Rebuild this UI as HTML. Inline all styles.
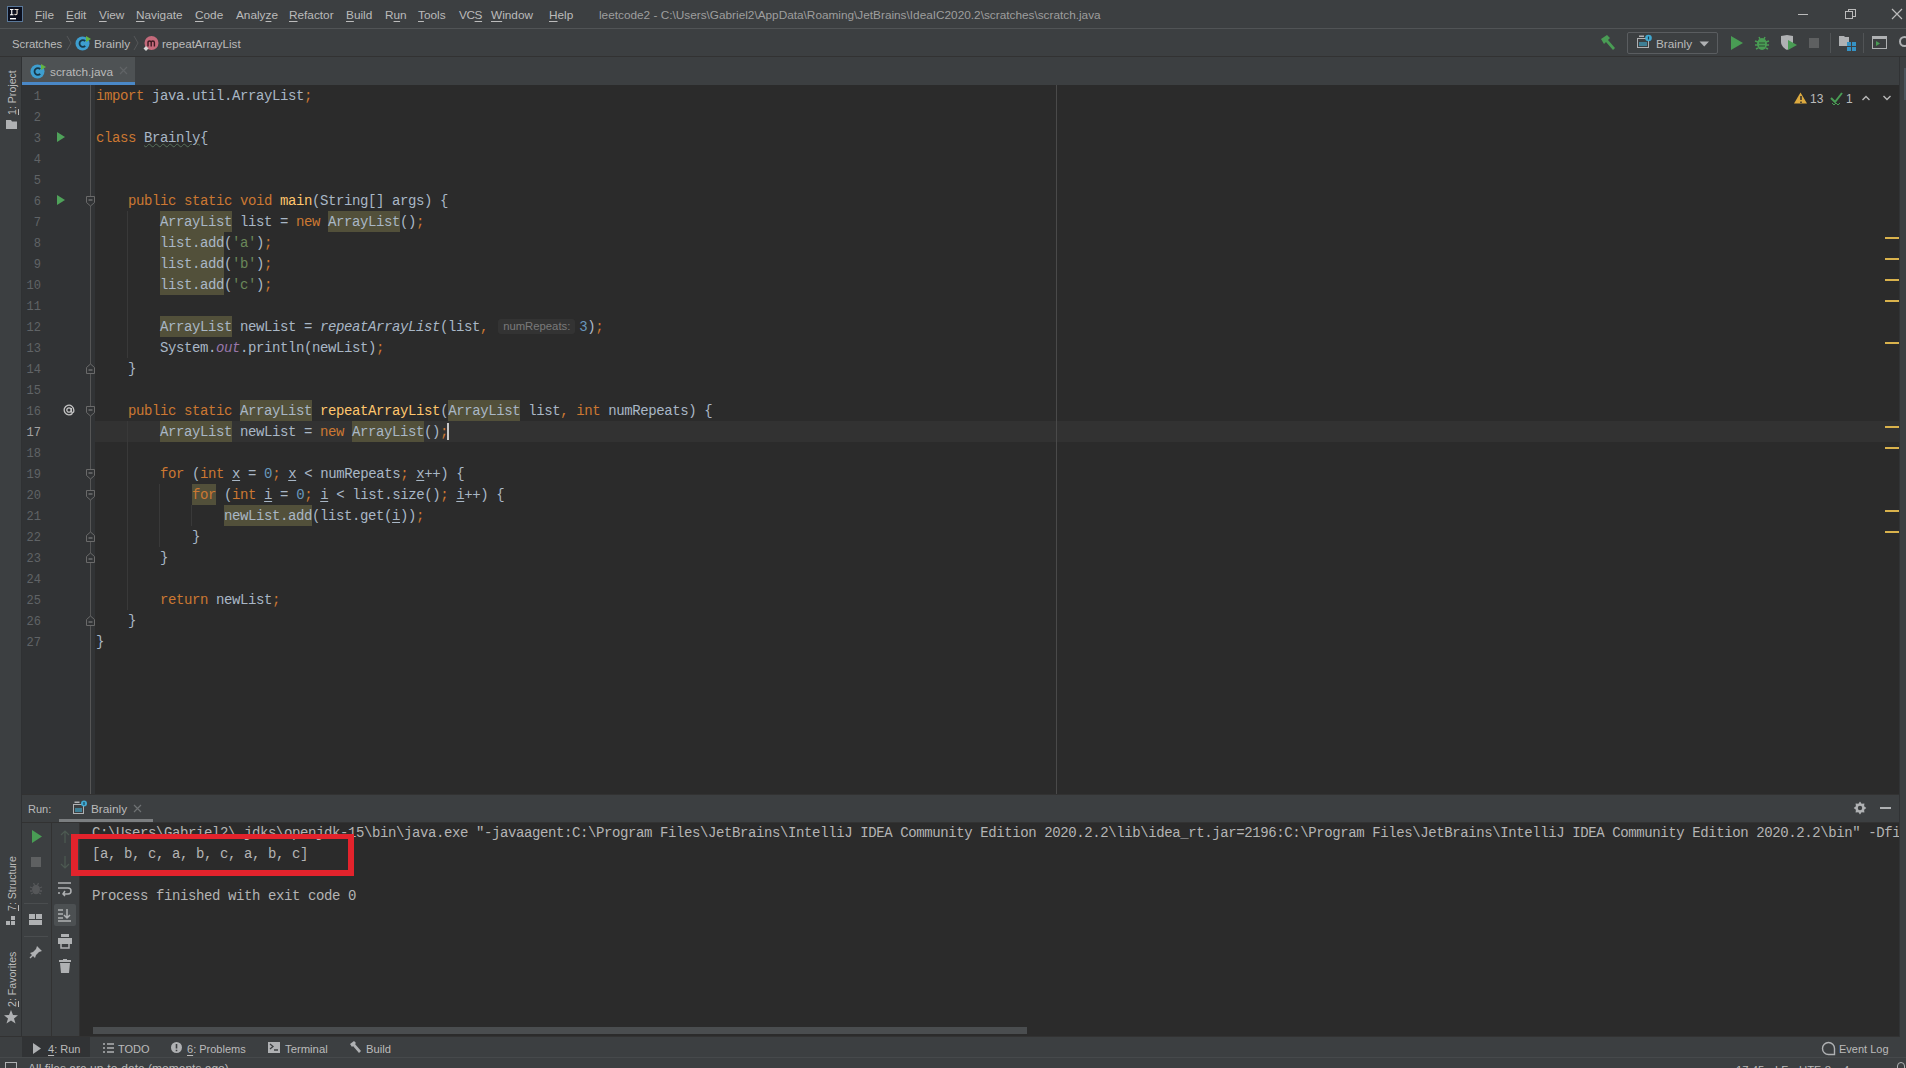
<!DOCTYPE html>
<html><head><meta charset="utf-8">
<style>
*{margin:0;padding:0;box-sizing:border-box}
html,body{width:1906px;height:1068px;overflow:hidden;background:#3C3F41}
body{position:relative;font-family:"Liberation Sans",sans-serif;font-size:13px;color:#BBBBBB}
.a{position:absolute}
.ui{position:absolute;font-family:"Liberation Sans",sans-serif;font-size:11.8px;color:#BBBBBB;white-space:nowrap;line-height:16px}
.mono{font-family:"Liberation Mono",monospace;font-size:14px;letter-spacing:-0.4px;white-space:pre}
.k{color:#CC7832}.d{color:#A9B7C6}.s{color:#6A8759}.n{color:#6897BB}.m{color:#FFC66D}
.f{color:#9876AA;font-style:italic}.it{font-style:italic}.w{position:relative}.w::before{content:"";position:absolute;left:0;right:0;top:-3px;height:21px;background:#52503A;z-index:-1}
.u{text-decoration:underline;text-decoration-color:#A9B7C6;text-underline-offset:2px}
.wv{text-decoration:underline wavy #56705A;text-decoration-thickness:1px;text-underline-offset:1px}
.ln{position:absolute;left:22px;width:19px;height:21px;text-align:right;font-family:"Liberation Mono",monospace;font-size:12px;line-height:21px;color:#606366}
.cl{position:absolute;left:96px;height:21px;line-height:21px;z-index:1;padding-top:1px}
.hint{display:inline-block;font-family:"Liberation Sans",sans-serif;font-size:11.3px;letter-spacing:0;color:#7A7A7A;background:#333333;border-radius:3px;padding:0 5px 0 5px;line-height:15px;margin:0 4px 0 2px;vertical-align:1px}
.caret{display:inline-block;width:2px;height:17px;background:#C8C8C8;vertical-align:-4px;margin-left:-1px}
.vt{position:absolute;transform-origin:0 0;transform:rotate(-90deg);font-family:"Liberation Sans",sans-serif;font-size:10.6px;color:#BBBBBB;white-space:nowrap;line-height:12px}
u{text-decoration:underline;text-underline-offset:1.5px}
</style></head><body>

<!-- MENU BAR -->
<div class="a" style="left:0;top:28px;width:1906px;height:1px;background:#515456"></div>
<!-- IJ logo -->
<div class="a" style="left:7px;top:6px;width:16px;height:16px;background:#0B0F1E;border:1px solid #5A7899"></div>
<svg class="a" style="left:9px;top:8px" width="12" height="12"><path d="M1 1H4.5V2H3.3V6.2H4.5V7.2H1V6.2H2.2V2H1Z" fill="#FFFFFF"/><path d="M5.5 1H9.5V2H8.6V5.6Q8.6 7.3 6.8 7.3Q5.4 7.3 5.2 6L6.2 5.7Q6.4 6.3 6.9 6.3Q7.5 6.3 7.5 5.5V2H5.5Z" fill="#F2E6D6"/><rect x="1" y="10" width="6" height="1.4" fill="#FFFFFF"/></svg>
<div class="ui" style="left:35px;top:7px"><u>F</u>ile</div>
<div class="ui" style="left:66px;top:7px"><u>E</u>dit</div>
<div class="ui" style="left:99px;top:7px"><u>V</u>iew</div>
<div class="ui" style="left:136px;top:7px"><u>N</u>avigate</div>
<div class="ui" style="left:195px;top:7px"><u>C</u>ode</div>
<div class="ui" style="left:236px;top:7px">Analy<u>z</u>e</div>
<div class="ui" style="left:289px;top:7px"><u>R</u>efactor</div>
<div class="ui" style="left:346px;top:7px"><u>B</u>uild</div>
<div class="ui" style="left:385px;top:7px">R<u>u</u>n</div>
<div class="ui" style="left:418px;top:7px"><u>T</u>ools</div>
<div class="ui" style="left:459px;top:7px;letter-spacing:-0.4px">VC<u>S</u></div>
<div class="ui" style="left:491px;top:7px"><u>W</u>indow</div>
<div class="ui" style="left:549px;top:7px"><u>H</u>elp</div>
<div class="ui" style="left:599px;top:7px;color:#9E9E9E">leetcode2 - C:\Users\Gabriel2\AppData\Roaming\JetBrains\IdeaIC2020.2\scratches\scratch.java</div>
<!-- window controls -->
<div class="a" style="left:1798px;top:14px;width:10px;height:1px;background:#BBBBBB"></div>
<div class="a" style="left:1848px;top:9px;width:8px;height:8px;border:1px solid #BBBBBB"></div>
<div class="a" style="left:1845px;top:11px;width:8px;height:8px;border:1px solid #BBBBBB;background:#3C3F41"></div>
<svg class="a" style="left:1891px;top:8px" width="12" height="12"><path d="M1 1L11 11M11 1L1 11" stroke="#BBBBBB" stroke-width="1.2"/></svg>

<!-- NAV BAR -->
<div class="a" style="left:0;top:56px;width:1906px;height:1px;background:#323232"></div>
<div class="ui" style="left:12px;top:36px;font-size:11.3px">Scratches</div>
<svg class="a" style="left:66px;top:35px" width="6" height="16"><path d="M1 1L5 8L1 15" stroke="#555759" fill="none"/></svg>
<svg class="a" style="left:75px;top:35px" width="17" height="16"><circle cx="7.5" cy="8.5" r="7" fill="#3E9ECF"/><path d="M10.2 6.2A3.3 3.3 0 1 0 10.2 10.8" stroke="#173848" stroke-width="1.8" fill="none"/><path d="M11 1L16 4L11 7Z" fill="#62B543"/></svg>
<div class="ui" style="left:94px;top:36px">Brainly</div>
<svg class="a" style="left:133px;top:35px" width="6" height="16"><path d="M1 1L5 8L1 15" stroke="#555759" fill="none"/></svg>
<svg class="a" style="left:142px;top:35px" width="18" height="17"><circle cx="9.5" cy="8" r="7" fill="#C46A7B"/><path d="M6 11.5V6.5M6 7.5Q6 6 7.6 6Q9.2 6 9.2 7.5V11.5M9.2 7.5Q9.2 6 10.8 6Q12.4 6 12.4 7.5V11.5" stroke="#3B1A22" stroke-width="1.4" fill="none"/><path d="M4 11L6.5 13.5L4 16L1.5 13.5Z" fill="#D8D8D8"/></svg>
<div class="ui" style="left:162px;top:36px;font-size:11.6px">repeatArrayList</div>

<!-- toolbar right -->
<svg class="a" style="left:1599px;top:34px" width="18" height="17"><path d="M2 5L8 1L11 4L9 6L16 14L14 16L7 8L5 10Z" fill="#499C54"/></svg>
<div class="a" style="left:1627px;top:32px;width:91px;height:22px;border:1px solid #5A5D60;border-radius:2px"></div>
<svg class="a" style="left:1636px;top:34px" width="18" height="16"><rect x="1.5" y="4.5" width="11" height="9" fill="none" stroke="#AFB1B3"/><rect x="3" y="8" width="8" height="4" fill="#3F7F95"/><rect x="3" y="1.5" width="5" height="1.5" fill="#AFB1B3"/><circle cx="12.5" cy="4" r="3.3" fill="#40A8D0"/><path d="M12.5 2.5V5.5" stroke="#1D3D4A" stroke-width="1.2"/></svg>
<div class="ui" style="left:1656px;top:36px">Brainly</div>
<svg class="a" style="left:1699px;top:41px" width="11" height="6"><path d="M0.5 0.5H10L5.25 5.5Z" fill="#AFB1B3"/></svg>
<svg class="a" style="left:1730px;top:36px" width="14" height="14"><path d="M1 0L13 7L1 14Z" fill="#499C54"/></svg>
<svg class="a" style="left:1754px;top:35px" width="16" height="16"><ellipse cx="8" cy="9" rx="5" ry="6" fill="#499C54"/><path d="M1 6L4 7M15 6L12 7M1 10H4M15 10H12M2 14L4 13M14 14L12 13M5 2L6 4M11 2L10 4" stroke="#499C54" stroke-width="1.5"/><path d="M5 8H11M5 11H11" stroke="#2E4A33" stroke-width="1.2"/></svg>
<svg class="a" style="left:1779px;top:34px" width="20" height="18"><path d="M2 2L8 1L14 2V8C14 12 10 15 8 16C6 15 2 12 2 8Z" fill="#AFB1B3"/><path d="M9 6L18 11L9 16Z" fill="#499C54"/></svg>
<div class="a" style="left:1809px;top:38px;width:10px;height:10px;background:#5E6061"></div>
<div class="a" style="left:1830px;top:33px;width:1px;height:20px;background:#515456"></div>
<svg class="a" style="left:1838px;top:34px" width="20" height="18"><path d="M1 2H6L7 3H11V12H1Z" fill="#AFB1B3"/><rect x="9" y="8" width="4" height="4" fill="#3592C4"/><rect x="14" y="8" width="4" height="4" fill="#3592C4"/><rect x="9" y="13" width="4" height="4" fill="#3592C4"/><rect x="14" y="13" width="4" height="4" fill="#3592C4"/></svg>
<div class="a" style="left:1863px;top:33px;width:1px;height:20px;background:#515456"></div>
<svg class="a" style="left:1872px;top:36px" width="16" height="14"><rect x="0.5" y="0.5" width="14" height="12" fill="none" stroke="#AFB1B3"/><rect x="1" y="1" width="13" height="2" fill="#AFB1B3"/><path d="M4 5L8 7.5L4 10Z" fill="#499C54"/></svg>
<div class="a" style="left:1899px;top:36px;width:11px;height:11px;border:2px solid #AFB1B3;border-radius:50%"></div>

<!-- LEFT STRIP -->
<div class="a" style="left:21px;top:57px;width:1px;height:980px;background:#2F3133"></div>
<div class="vt" style="left:6px;top:115px"><u>1</u>: Project</div>
<svg class="a" style="left:6px;top:119px" width="11" height="10"><path d="M0 1H5L6 2.5H11V10H0Z" fill="#AFB1B3"/></svg>
<div class="vt" style="left:6px;top:911px"><u>7</u>: Structure</div>
<svg class="a" style="left:6px;top:916px" width="11" height="11"><rect x="5" y="0" width="4" height="4" fill="#AFB1B3"/><rect x="0" y="5" width="4" height="4" fill="#AFB1B3"/><rect x="5" y="5" width="4" height="4" fill="#AFB1B3"/></svg>
<div class="vt" style="left:6px;top:1007px"><u>2</u>: Favorites</div>
<svg class="a" style="left:4px;top:1010px" width="14" height="14"><path d="M7 0L9 5L14 5.3L10 8.5L11.5 13.5L7 10.5L2.5 13.5L4 8.5L0 5.3L5 5Z" fill="#AFB1B3"/></svg>

<!-- TAB BAR -->
<div class="a" style="left:22px;top:57px;width:113px;height:28px;background:#4E5254"></div>
<div class="a" style="left:22px;top:82px;width:113px;height:3px;background:#4A88C7"></div>
<svg class="a" style="left:30px;top:63px" width="17" height="16"><circle cx="7.5" cy="8.5" r="7" fill="#3E9ECF"/><path d="M10.2 6.2A3.3 3.3 0 1 0 10.2 10.8" stroke="#173848" stroke-width="1.8" fill="none"/><path d="M11 1L16 4L11 7Z" fill="#62B543"/></svg>
<div class="ui" style="left:50px;top:64px">scratch.java</div>
<svg class="a" style="left:119px;top:66px" width="9" height="9"><path d="M1 1L8 8M8 1L1 8" stroke="#606366" stroke-width="1.2"/></svg>

<!-- EDITOR -->
<div class="a" style="left:22px;top:85px;width:73px;height:709px;background:#313335"></div>
<div class="a" style="left:95px;top:85px;width:1804px;height:709px;background:#2B2B2B"></div>
<div class="a" style="left:90px;top:85px;width:1px;height:709px;background:#555555"></div>
<!-- caret row -->
<div class="a" style="left:95px;top:421px;width:1804px;height:21px;background:#323232"></div>
<!-- right margin -->
<div class="a" style="left:1056px;top:85px;width:1px;height:709px;background:#4A4A4A"></div>
<!-- indent guides -->
<div class="a" style="left:127px;top:211px;width:1px;height:147px;background:#393939"></div>
<div class="a" style="left:127px;top:421px;width:1px;height:189px;background:#393939"></div>
<div class="a" style="left:159px;top:484px;width:1px;height:63px;background:#393939"></div>
<div class="a" style="left:191px;top:505px;width:1px;height:21px;background:#393939"></div>

<div class="ln" style="top:87px">1</div>
<div class="cl mono d" style="top:85px"><span class="k">import</span> java.util.ArrayList<span class="k">;</span></div>
<div class="ln" style="top:108px">2</div>
<div class="ln" style="top:129px">3</div>
<div class="cl mono d" style="top:127px"><span class="k">class</span> <span class="wv">Brainly</span>{</div>
<div class="ln" style="top:150px">4</div>
<div class="ln" style="top:171px">5</div>
<div class="ln" style="top:192px">6</div>
<div class="cl mono d" style="top:190px">    <span class="k">public static void</span> <span class="m">main</span>(String[] args) {</div>
<div class="ln" style="top:213px">7</div>
<div class="cl mono d" style="top:211px">        <span class="w">ArrayList</span> list = <span class="k">new</span> <span class="w">ArrayList</span>()<span class="k">;</span></div>
<div class="ln" style="top:234px">8</div>
<div class="cl mono d" style="top:232px">        <span class="w">list.add</span>(<span class="s">'a'</span>)<span class="k">;</span></div>
<div class="ln" style="top:255px">9</div>
<div class="cl mono d" style="top:253px">        <span class="w">list.add</span>(<span class="s">'b'</span>)<span class="k">;</span></div>
<div class="ln" style="top:276px">10</div>
<div class="cl mono d" style="top:274px">        <span class="w">list.add</span>(<span class="s">'c'</span>)<span class="k">;</span></div>
<div class="ln" style="top:297px">11</div>
<div class="ln" style="top:318px">12</div>
<div class="cl mono d" style="top:316px">        <span class="w">ArrayList</span> newList = <span class="it">repeatArrayList</span>(list<span class="k">,</span> <span class="hint">numRepeats:</span><span class="n">3</span>)<span class="k">;</span></div>
<div class="ln" style="top:339px">13</div>
<div class="cl mono d" style="top:337px">        System.<span class="f">out</span>.println(newList)<span class="k">;</span></div>
<div class="ln" style="top:360px">14</div>
<div class="cl mono d" style="top:358px">    }</div>
<div class="ln" style="top:381px">15</div>
<div class="ln" style="top:402px">16</div>
<div class="cl mono d" style="top:400px">    <span class="k">public static</span> <span class="w">ArrayList</span> <span class="m">repeatArrayList</span>(<span class="w">ArrayList</span> list<span class="k">,</span> <span class="k">int</span> numRepeats) {</div>
<div class="ln" style="top:423px;color:#A4A3A3">17</div>
<div class="cl mono d" style="top:421px">        <span class="w">ArrayList</span> newList = <span class="k">new</span> <span class="w">ArrayList</span>()<span class="k">;</span><span class="caret"></span></div>
<div class="ln" style="top:444px">18</div>
<div class="ln" style="top:465px">19</div>
<div class="cl mono d" style="top:463px">        <span class="k">for</span> (<span class="k">int</span> <span class="u">x</span> = <span class="n">0</span><span class="k">;</span> <span class="u">x</span> &lt; numRepeats<span class="k">;</span> <span class="u">x</span>++) {</div>
<div class="ln" style="top:486px">20</div>
<div class="cl mono d" style="top:484px">            <span class="k w">for</span> (<span class="k">int</span> <span class="u">i</span> = <span class="n">0</span><span class="k">;</span> <span class="u">i</span> &lt; list.size()<span class="k">;</span> <span class="u">i</span>++) {</div>
<div class="ln" style="top:507px">21</div>
<div class="cl mono d" style="top:505px">                <span class="w">newList.add</span>(list.get(<span class="u">i</span>))<span class="k">;</span></div>
<div class="ln" style="top:528px">22</div>
<div class="cl mono d" style="top:526px">            }</div>
<div class="ln" style="top:549px">23</div>
<div class="cl mono d" style="top:547px">        }</div>
<div class="ln" style="top:570px">24</div>
<div class="ln" style="top:591px">25</div>
<div class="cl mono d" style="top:589px">        <span class="k">return</span> newList<span class="k">;</span></div>
<div class="ln" style="top:612px">26</div>
<div class="cl mono d" style="top:610px">    }</div>
<div class="ln" style="top:633px">27</div>
<div class="cl mono d" style="top:631px">}</div>
<svg class="a" style="left:85px;top:196px;z-index:2" width="11" height="11"><path d="M1.5 0.5H9.5V6.5L5.5 10L1.5 6.5Z" fill="#313335" stroke="#6A6A6A"/><path d="M3.5 4H7.5" stroke="#8A8A8A"/></svg>
<svg class="a" style="left:85px;top:406px;z-index:2" width="11" height="11"><path d="M1.5 0.5H9.5V6.5L5.5 10L1.5 6.5Z" fill="#313335" stroke="#6A6A6A"/><path d="M3.5 4H7.5" stroke="#8A8A8A"/></svg>
<svg class="a" style="left:85px;top:469px;z-index:2" width="11" height="11"><path d="M1.5 0.5H9.5V6.5L5.5 10L1.5 6.5Z" fill="#313335" stroke="#6A6A6A"/><path d="M3.5 4H7.5" stroke="#8A8A8A"/></svg>
<svg class="a" style="left:85px;top:490px;z-index:2" width="11" height="11"><path d="M1.5 0.5H9.5V6.5L5.5 10L1.5 6.5Z" fill="#313335" stroke="#6A6A6A"/><path d="M3.5 4H7.5" stroke="#8A8A8A"/></svg>
<svg class="a" style="left:85px;top:363px;z-index:2" width="11" height="11"><path d="M1.5 10.5H9.5V4.5L5.5 1L1.5 4.5Z" fill="#313335" stroke="#6A6A6A"/><path d="M3.5 7H7.5" stroke="#8A8A8A"/></svg>
<svg class="a" style="left:85px;top:531px;z-index:2" width="11" height="11"><path d="M1.5 10.5H9.5V4.5L5.5 1L1.5 4.5Z" fill="#313335" stroke="#6A6A6A"/><path d="M3.5 7H7.5" stroke="#8A8A8A"/></svg>
<svg class="a" style="left:85px;top:552px;z-index:2" width="11" height="11"><path d="M1.5 10.5H9.5V4.5L5.5 1L1.5 4.5Z" fill="#313335" stroke="#6A6A6A"/><path d="M3.5 7H7.5" stroke="#8A8A8A"/></svg>
<svg class="a" style="left:85px;top:615px;z-index:2" width="11" height="11"><path d="M1.5 10.5H9.5V4.5L5.5 1L1.5 4.5Z" fill="#313335" stroke="#6A6A6A"/><path d="M3.5 7H7.5" stroke="#8A8A8A"/></svg>

<!-- gutter icons -->
<svg class="a" style="left:57px;top:132px" width="9" height="11"><path d="M0 0L8 5L0 10Z" fill="#4FA25A"/></svg>
<svg class="a" style="left:57px;top:195px" width="9" height="11"><path d="M0 0L8 5L0 10Z" fill="#4FA25A"/></svg>
<svg class="a" style="left:63px;top:404px" width="12" height="12"><path d="M9.6 9.2A4.8 4.8 0 1 1 10.8 6V7.2Q10.8 8.4 9.6 8.4Q8.4 8.4 8.4 7.2V4" stroke="#C4C4C4" stroke-width="1.3" fill="none"/><circle cx="6" cy="6" r="2.2" stroke="#C4C4C4" stroke-width="1.3" fill="none"/></svg>

<!-- inspection widget -->
<svg class="a" style="left:1794px;top:92px" width="14" height="12"><path d="M6.5 0.5L13 11.5H0Z" fill="#DDAA3F"/><path d="M7 4V8M7 9.5V11" stroke="#2B2B2B" stroke-width="1.5"/></svg>
<div class="ui" style="left:1810px;top:91px;font-size:12px">13</div>
<svg class="a" style="left:1830px;top:92px" width="13" height="14"><path d="M1 6L5 10L12 1" stroke="#499C54" stroke-width="2" fill="none"/><path d="M2 11L4 13L6 11L8 13L10 11" stroke="#499C54" fill="none"/></svg>
<div class="ui" style="left:1846px;top:91px;font-size:12px">1</div>
<svg class="a" style="left:1861px;top:95px" width="10" height="6"><path d="M1.5 5L5 1.5L8.5 5" stroke="#B8B8B8" stroke-width="1.4" fill="none"/></svg>
<svg class="a" style="left:1882px;top:95px" width="10" height="6"><path d="M1.5 1L5 4.5L8.5 1" stroke="#B8B8B8" stroke-width="1.4" fill="none"/></svg>

<!-- error stripe marks -->
<div class="a" style="left:1885px;top:237px;width:14px;height:2px;background:#D9B24C"></div>
<div class="a" style="left:1885px;top:258px;width:14px;height:2px;background:#D9B24C"></div>
<div class="a" style="left:1885px;top:279px;width:14px;height:2px;background:#D9B24C"></div>
<div class="a" style="left:1885px;top:300px;width:14px;height:2px;background:#D9B24C"></div>
<div class="a" style="left:1885px;top:342px;width:14px;height:2px;background:#D9B24C"></div>
<div class="a" style="left:1885px;top:426px;width:14px;height:2px;background:#D9B24C"></div>
<div class="a" style="left:1885px;top:447px;width:14px;height:2px;background:#D9B24C"></div>
<div class="a" style="left:1885px;top:510px;width:14px;height:2px;background:#D9B24C"></div>
<div class="a" style="left:1885px;top:531px;width:14px;height:2px;background:#D9B24C"></div>

<!-- RUN PANEL -->
<div class="a" style="left:22px;top:794px;width:1878px;height:1px;background:#323232"></div>
<div class="a" style="left:22px;top:795px;width:1878px;height:27px;background:#3C3F41"></div>
<div class="ui" style="left:28px;top:801px;font-size:11px">Run:</div>
<svg class="a" style="left:72px;top:800px" width="16" height="15"><rect x="1.5" y="4.5" width="10" height="9" fill="none" stroke="#AFB1B3"/><rect x="3" y="8" width="7" height="4" fill="#3F7F95"/><rect x="2.5" y="1.5" width="5" height="1.5" fill="#AFB1B3"/><circle cx="12" cy="3.5" r="3" fill="#40A8D0"/><path d="M12 2V5" stroke="#1D3D4A" stroke-width="1.1"/></svg>
<div class="ui" style="left:91px;top:801px">Brainly</div>
<svg class="a" style="left:133px;top:804px" width="9" height="9"><path d="M1 1L8 8M8 1L1 8" stroke="#6E7173" stroke-width="1.2"/></svg>
<div class="a" style="left:59px;top:819px;width:94px;height:3px;background:#7B7E80"></div>
<div class="a" style="left:22px;top:822px;width:1878px;height:1px;background:#323232"></div>
<svg class="a" style="left:1853px;top:801px" width="14" height="14"><path d="M7 0.5L8.6 2.7L11.4 2.4L11.1 5.2L13.3 7L11.1 8.8L11.4 11.6L8.6 11.3L7 13.5L5.4 11.3L2.6 11.6L2.9 8.8L0.7 7L2.9 5.2L2.6 2.4L5.4 2.7Z" fill="#AFB1B3"/><circle cx="7" cy="7" r="2.2" fill="#3C3F41"/></svg>
<div class="a" style="left:1880px;top:807px;width:11px;height:2px;background:#AFB1B3"></div>

<!-- console tool columns -->
<div class="a" style="left:51px;top:823px;width:1px;height:214px;background:#323232"></div>
<div class="a" style="left:79px;top:823px;width:1px;height:214px;background:#323232"></div>
<div class="a" style="left:80px;top:823px;width:1820px;height:214px;background:#2B2B2B"></div>
<svg class="a" style="left:31px;top:830px" width="12" height="13"><path d="M1 0L11 6.5L1 13Z" fill="#499C54"/></svg>
<div class="a" style="left:31px;top:857px;width:10px;height:10px;background:#5E6061"></div>
<svg class="a" style="left:29px;top:881px" width="14" height="14"><ellipse cx="7" cy="8.5" rx="4" ry="4.8" fill="#555759"/><path d="M1 6L3.5 7M13 6L10.5 7M1 10H3M13 10H11M2 13L4 12M12 13L10 12M4.5 2L5.5 4M9.5 2L8.5 4" stroke="#555759" stroke-width="1.3"/></svg>
<div class="a" style="left:24px;top:903px;width:24px;height:1px;background:#4A4D4F"></div>
<svg class="a" style="left:29px;top:914px" width="14" height="12"><rect x="0" y="0" width="6" height="5" fill="#AFB1B3"/><rect x="7" y="0" width="6" height="5" fill="#AFB1B3"/><rect x="0" y="6" width="13" height="5" fill="#AFB1B3"/></svg>
<div class="a" style="left:24px;top:936px;width:24px;height:1px;background:#4A4D4F"></div>
<svg class="a" style="left:29px;top:945px" width="14" height="14"><path d="M8 1L13 6L10 7L7 10L6 13L1 8L4 7L7 4Z" fill="#AFB1B3"/><path d="M4 10L1 13" stroke="#AFB1B3" stroke-width="1.5"/></svg>
<svg class="a" style="left:59px;top:830px" width="12" height="14"><path d="M6 1V13M2 5L6 1L10 5" stroke="#4D5A52" stroke-width="1.2" fill="none"/></svg>
<svg class="a" style="left:59px;top:855px" width="12" height="14"><path d="M6 1V13M2 9L6 13L10 9" stroke="#4D5A52" stroke-width="1.2" fill="none"/></svg>
<svg class="a" style="left:57px;top:881px" width="16" height="16"><path d="M1 2H14M1 7H11A3 3 0 0 1 11 13H6M1 12H3M8 10L6 13L8 15" stroke="#AFB1B3" stroke-width="1.5" fill="none"/></svg>
<div class="a" style="left:54px;top:904px;width:22px;height:22px;background:#4C5052;border-radius:2px"></div>
<svg class="a" style="left:57px;top:907px" width="16" height="16"><path d="M1 3H6M1 7H6M1 11H6M1 14H14M10 2V11M7 8L10 11L13 8" stroke="#AFB1B3" stroke-width="1.5" fill="none"/></svg>
<svg class="a" style="left:57px;top:934px" width="16" height="15"><rect x="4" y="0" width="8" height="3" fill="#AFB1B3"/><rect x="1" y="4" width="14" height="6" fill="#AFB1B3"/><rect x="4" y="9" width="8" height="5" fill="none" stroke="#AFB1B3" stroke-width="1.5"/></svg>
<svg class="a" style="left:58px;top:959px" width="14" height="15"><rect x="1" y="1" width="12" height="2" fill="#AFB1B3"/><rect x="5" y="0" width="4" height="2" fill="#AFB1B3"/><path d="M2 4H12L11 14H3Z" fill="#AFB1B3"/></svg>

<!-- console text -->
<div class="a mono" style="left:92px;top:823px;line-height:21px;color:#B4B4B4">C:\Users\Gabriel2\.jdks\openjdk-15\bin\java.exe "-javaagent:C:\Program Files\JetBrains\IntelliJ IDEA Community Edition 2020.2.2\lib\idea_rt.jar=2196:C:\Program Files\JetBrains\IntelliJ IDEA Community Edition 2020.2.2\bin" -Dfile.encoding=UTF-8
[a, b, c, a, b, c, a, b, c]

Process finished with exit code 0</div>
<div class="a" style="left:1899px;top:823px;width:1px;height:214px;background:#3C3F41"></div>
<!-- red box -->
<div class="a" style="left:71px;top:834px;width:283px;height:42px;border:6px solid #E3232C;border-left-width:7px;border-top-width:5px"></div>
<!-- h scrollbar -->
<div class="a" style="left:93px;top:1027px;width:934px;height:7px;background:#4A4D4F;border-radius:0"></div>

<!-- BOTTOM TOOL STRIP -->
<div class="a" style="left:0;top:1036px;width:1906px;height:1px;background:#323232"></div>
<div class="a" style="left:22px;top:1037px;width:68px;height:21px;background:#313335"></div>
<svg class="a" style="left:33px;top:1043px" width="8" height="11"><path d="M0 0L8 5.5L0 11Z" fill="#AFB1B3"/></svg>
<div class="ui" style="left:48px;top:1041px;font-size:11px"><u>4</u>: Run</div>
<svg class="a" style="left:103px;top:1043px" width="11" height="10"><path d="M0 1H2M4 1H11M0 5H2M4 5H11M0 9H2M4 9H11" stroke="#AFB1B3" stroke-width="1.5"/></svg>
<div class="ui" style="left:118px;top:1041px;font-size:11px">TODO</div>
<svg class="a" style="left:171px;top:1042px" width="11" height="11"><circle cx="5.5" cy="5.5" r="5.5" fill="#AFB1B3"/><path d="M5.5 2V6.5M5.5 7.8V9.3" stroke="#3C3F41" stroke-width="1.6"/></svg>
<div class="ui" style="left:187px;top:1041px;font-size:11px"><u>6</u>: Problems</div>
<svg class="a" style="left:268px;top:1042px" width="12" height="11"><rect x="0" y="0" width="12" height="11" fill="#AFB1B3"/><path d="M2 2L5 4.5L2 7M6 8H10" stroke="#3C3F41" stroke-width="1.3" fill="none"/></svg>
<div class="ui" style="left:285px;top:1041px;font-size:11.3px">Terminal</div>
<svg class="a" style="left:349px;top:1041px" width="13" height="13"><path d="M1 3L5 0L7 2L6 3L12 10L10 12L4 5L3 6Z" fill="#AFB1B3"/></svg>
<div class="ui" style="left:366px;top:1041px;font-size:11.2px">Build</div>
<svg class="a" style="left:1821px;top:1041px" width="15" height="15"><path d="M7.5 13.5H13.5V7.5A6 6 0 1 0 7.5 13.5Z" stroke="#AFB1B3" stroke-width="1.4" fill="none"/></svg>
<div class="ui" style="left:1839px;top:1041px;font-size:11px">Event Log</div>

<!-- STATUS BAR -->
<div class="a" style="left:0;top:1057px;width:1906px;height:1px;background:#46494B"></div>
<div class="a" style="left:5px;top:1062px;width:12px;height:10px;border:1px solid #AFB1B3"></div>
<div class="ui" style="left:28px;top:1061px;font-size:12px">All files are up-to-date (moments ago)</div>
<div class="ui" style="left:1736px;top:1062px;font-size:11.3px">17:45</div>
<div class="ui" style="left:1775px;top:1062px;font-size:11.3px">LF</div>
<div class="ui" style="left:1799px;top:1062px;font-size:11.3px">UTF-8</div>
<div class="ui" style="left:1843px;top:1062px;font-size:11.3px">4 spaces</div>
<div class="a" style="left:1897px;top:1062px;width:8px;height:10px;border:1.5px solid #AFB1B3;border-radius:4px 4px 0 0"></div>

<!-- RIGHT STRIP -->
<div class="a" style="left:1899px;top:57px;width:7px;height:980px;background:#3C3F41"></div>
<div class="a" style="left:1899px;top:57px;width:1px;height:980px;background:#313335"></div>
<div class="a" style="left:1904px;top:68px;width:2px;height:32px;background:#4C545B"></div>

</body></html>
